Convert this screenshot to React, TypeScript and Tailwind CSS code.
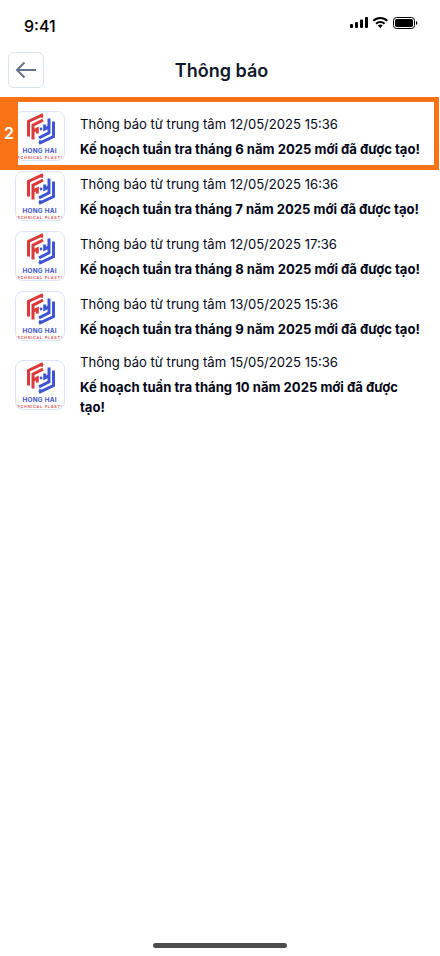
import React from "react";

const items = [
  { time: "12/05/2025 15:36", text: "Kế hoạch tuần tra tháng 6 năm 2025 mới đã được tạo!" },
  { time: "12/05/2025 16:36", text: "Kế hoạch tuần tra tháng 7 năm 2025 mới đã được tạo!" },
  { time: "12/05/2025 17:36", text: "Kế hoạch tuần tra tháng 8 năm 2025 mới đã được tạo!" },
  { time: "13/05/2025 15:36", text: "Kế hoạch tuần tra tháng 9 năm 2025 mới đã được tạo!" },
  { time: "15/05/2025 15:36", text: "Kế hoạch tuần tra tháng 10 năm 2025 mới đã được tạo!" },
];

function HalfMark() {
  return (
    <>
      <path d="M1.5 23.5V8.4L16 1.6" />
      <path d="M6 26.5V12.2L16 7.2" />
      <path d="M6 18.2L10.3 16V20.5" />
      <path d="M14.9 1.6V4.8" strokeWidth="2.2" />
    </>
  );
}

function Logo() {
  return (
    <div className="flex h-[50px] w-[50px] shrink-0 flex-col items-center overflow-hidden rounded-lg border-[1.5px] border-[#dbe4fe] bg-white">
      <svg className="ml-[2px] mt-[1px] shrink-0" width="28" height="32" viewBox="0 0 28 32" fill="none" strokeWidth="3">
        <g stroke="#dc3b3c">
          <HalfMark />
        </g>
        <g stroke="#3f55d3" transform="rotate(180 14 16)">
          <HalfMark />
        </g>
        <circle cx="14" cy="16" r="1.4" fill="#3f55d3" />
      </svg>
      <span className="mt-[2px] scale-x-[1.1] whitespace-nowrap text-[5.8px] font-bold leading-[8px] tracking-[0.25px] text-[#3f55c8]">HONG HAI</span>
      <span className="whitespace-nowrap text-[3.8px] font-semibold leading-[5px] tracking-[0.75px] text-[#dc4a4a]">ECHNICAL PLASTI</span>
    </div>
  );
}

export default function App() {
  return (
    <main className="relative flex h-[956px] w-[440px] flex-col overflow-hidden bg-white font-['Inter',sans-serif] text-[#020617]">
      <div className="flex h-[52px] items-start justify-between pl-6 pr-[22px] pt-4">
        <span className="text-base font-medium leading-5 text-black">9:41</span>
        <svg width="68" height="14" viewBox="0 0 68 14">
          <rect x="0" y="8" width="3" height="4" rx="1" />
          <rect x="5" y="6" width="3" height="6" rx="1" />
          <rect x="10" y="3.5" width="3" height="8.5" rx="1" />
          <rect x="15" y="1" width="3" height="11" rx="1" />
          <g fill="none" stroke="#000" strokeWidth="2">
            <path d="M23.3 4.8a10 10 0 0 1 14 0" />
            <path d="M26 7.7a6.2 6.2 0 0 1 8.6 0" />
          </g>
          <path d="M27.9 9.6a3.6 3.6 0 0 1 4.8 0L30.3 12z" />
          <rect x="43.5" y="1.5" width="21" height="11" rx="3" fill="none" stroke="#000" />
          <rect x="45" y="3" width="18" height="8" rx="1.8" />
          <path d="M66 5v4c1.8-.8 1.8-3.2 0-4z" />
        </svg>
      </div>
      <header className="grid h-[36px] grid-cols-[36px_1fr_36px] items-center px-2">
        <button className="flex h-9 w-9 items-center justify-center rounded-md border border-[#dbe3f0]">
          <svg width="22" height="18" viewBox="0 0 22 18" fill="none" stroke="#64748b" strokeWidth="2">
            <path d="M21 9H2M9.5 1.5L2 9L9.5 16.5" />
          </svg>
        </button>
        <h1 className="pl-[3px] pt-[2px] text-center text-lg font-semibold leading-7 text-[#0f172a]">Thông báo</h1>
      </header>
      <ul className="mt-[23px] flex flex-col gap-[10px] pl-[15px] pr-[17px]">
        {items.map((item) => (
          <li key={item.time} className="flex min-h-[50px] items-center gap-[15px] last:mt-px last:h-[65px]">
            <Logo />
            <div className="flex flex-1 flex-col gap-[5px] text-[13.1px] leading-5">
              <p>Thông báo từ trung tâm {item.time}</p>
              <p className="font-bold">{item.text}</p>
            </div>
          </li>
        ))}
      </ul>
      <div className="absolute left-0 top-[97px] flex h-[73px] w-[439px] items-center border-y-[5px] border-r-[5px] border-[#f97316]">
        <div className="flex h-full w-[18px] items-center justify-center bg-[#f97316] pb-[2px] text-base font-semibold text-white">2</div>
      </div>
      <div className="mx-auto mb-2 mt-auto h-[5px] w-[134px] rounded-full bg-[#4d4d4d]" />
    </main>
  );
}
